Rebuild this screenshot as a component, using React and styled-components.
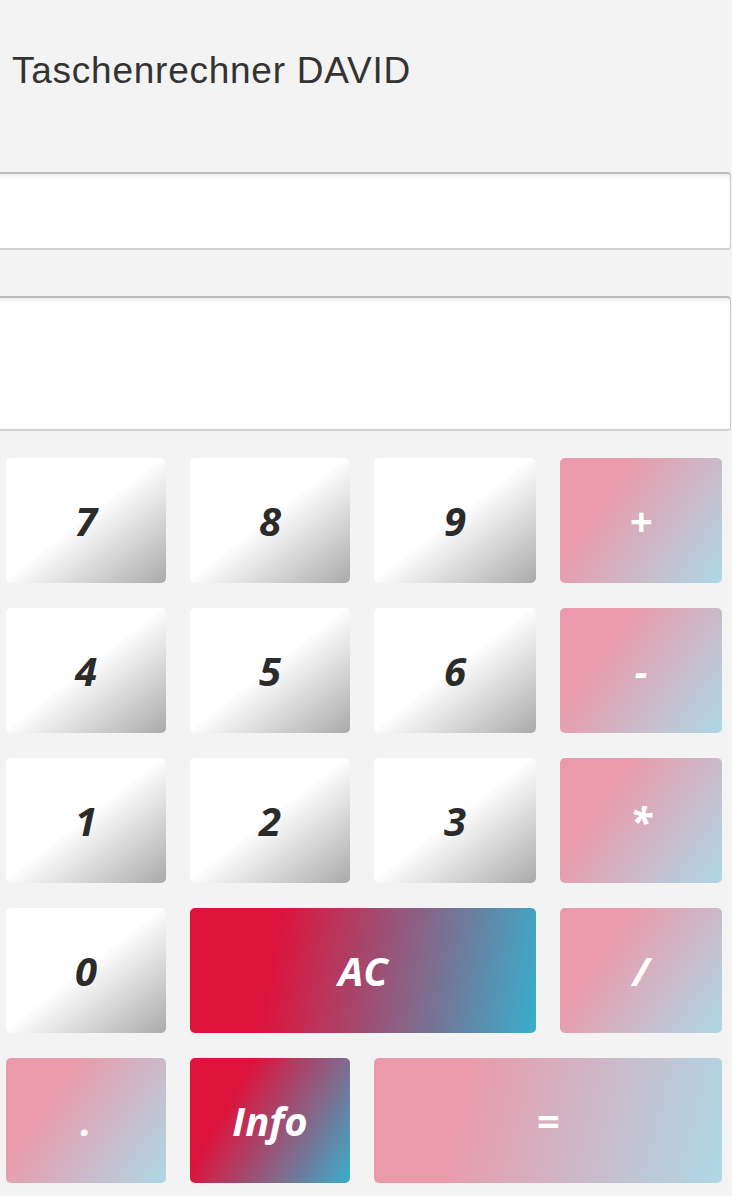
import React from "react";
import styled, { createGlobalStyle } from "styled-components";

const GlobalStyle = createGlobalStyle`
  html, body {
    margin: 0;
    padding: 0;
    background: #f3f3f3;
    overflow: hidden;
  }
`;

const Page = styled.div`
  width: 732px;
  height: 1196px;
  background: #f3f3f3;
  overflow: hidden;
`;

const Title = styled.h1`
  margin: 0;
  padding: 52px 0 0 12px;
  height: 172px;
  box-sizing: border-box;
  font-family: "Liberation Sans", Arial, sans-serif;
  font-weight: 400;
  font-size: 37px;
  line-height: 1;
  color: #333;
  letter-spacing: 0.75px;
`;

const Field = styled.div`
  margin-left: -10px;
  width: calc(100% + 9px);
  height: ${({ $h }) => $h}px;
  box-sizing: border-box;
  background: #fff;
  border-top: 2px solid #bbb;
  border-bottom: 2px solid #cfcfcf;
  border-right: 1px solid #ccc;
  border-radius: 4px;
  box-shadow: inset 0 5px 6px -4px rgba(0, 0, 0, 0.12);
`;

const Spacer = styled.div`
  height: 46px;
`;

const Keys = styled.div`
  display: grid;
  grid-template-columns: 160px 160px 162px 162px;
  grid-auto-rows: 125px;
  column-gap: 24px;
  row-gap: 25px;
  padding: 27px 0 0 6px;
`;

const Key = styled.button`
  grid-column: span ${({ $span }) => $span || 1};
  border: none;
  border-radius: 5px;
  padding: 0;
  background: ${({ $bg }) => $bg};
  color: ${({ $dark }) => ($dark ? "#2b2b2b" : "#fff")};
  font-family: "Open Sans", "Noto Sans", sans-serif;
  font-weight: 700;
  font-style: italic;
  font-size: 40px;
  line-height: 1;
  display: flex;
  align-items: center;
  justify-content: center;
`;

const num = "linear-gradient(to bottom right, #ffffff 48%, #aaaaaa)";
const op = "linear-gradient(125deg, #eb9aab 28%, #add8e6)";
const wideOp = "linear-gradient(105deg, #eb9aab 25%, #add8e6)";
const ac = "linear-gradient(100deg, #dc143c 25%, #38aecc)";
const info = "linear-gradient(120deg, #dc143c 28%, #38aecc)";

const keys = [
  ["7", num, 1, true], ["8", num, 1, true], ["9", num, 1, true], ["+", op],
  ["4", num, 1, true], ["5", num, 1, true], ["6", num, 1, true], ["-", op],
  ["1", num, 1, true], ["2", num, 1, true], ["3", num, 1, true], ["*", op],
  ["0", num, 1, true], ["AC", ac, 2], ["/", op],
  [".", op], ["Info", info], ["=", wideOp, 2],
];

export default function App() {
  return (
    <Page>
      <GlobalStyle />
      <Title>Taschenrechner DAVID</Title>
      <Field $h={78} />
      <Spacer />
      <Field $h={135} />
      <Keys>
        {keys.map(([label, bg, span, dark], i) => (
          <Key key={i} $bg={bg} $span={span} $dark={dark}>
            {label}
          </Key>
        ))}
      </Keys>
    </Page>
  );
}
